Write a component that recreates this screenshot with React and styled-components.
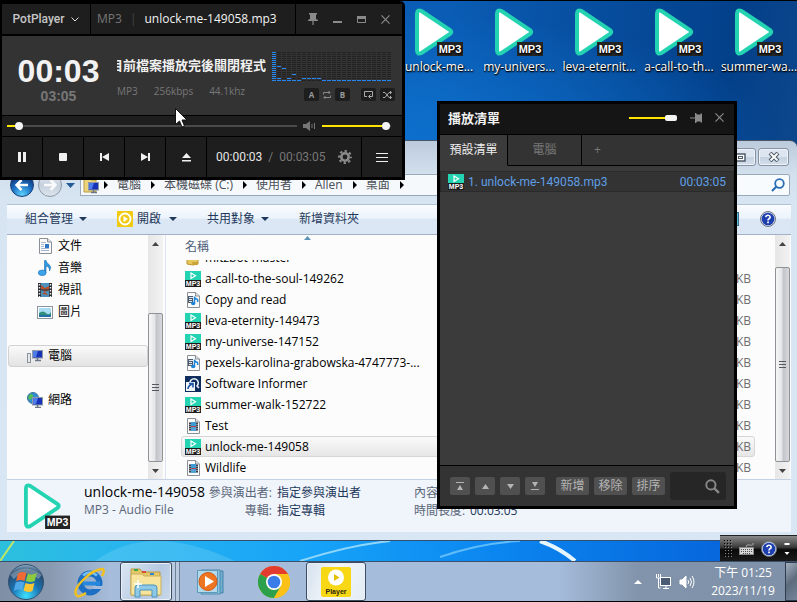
import React from "react";
import styled, { createGlobalStyle, css } from "styled-components";

const UI = `"Open Sans", "Noto Sans CJK TC", sans-serif`;
const COMPACT = `Roboto, "Noto Sans CJK TC", sans-serif`;

const GlobalStyle = createGlobalStyle`
  *, *::before, *::after { box-sizing: border-box; }
  body { margin: 0; font-family: ${UI}; font-size: 12px; line-height: 16px; background: #000; }
  button, input { font: inherit; color: inherit; margin: 0; padding: 0; border: 0; background: none; border-radius: 0; }
  button { cursor: pointer; }
  svg { display: block; flex: none; }
  a { color: inherit; text-decoration: none; }
`;

/* ---------- desktop ---------- */

const Desktop = styled.div`
  position: relative;
  display: flex;
  flex-direction: column;
  min-height: 100vh;
  overflow: hidden;
  background:
    radial-gradient(ellipse 420px 130px at 45% 140px, #0d72cf 0%, rgba(13, 114, 207, 0) 100%),
    linear-gradient(100deg, #0a5cb4 50%, #03408a 82%, #164c8c 100%);
`;

const IconRow = styled.div`
  display: flex;
  height: 140px;
  padding: 7px 0 0 399px;
  border-top: 1px solid #000;
`;

const Shortcut = styled.a`
  display: flex;
  flex: none;
  flex-direction: column;
  align-items: center;
  gap: 3px;
  width: 80px;
  color: #fff;
  text-shadow: 1px 1px 2px #000, 0 1px 1px #000;
  white-space: nowrap;
`;

const Strip = styled.div`
  position: relative;
  height: 21px;
  overflow: hidden;
  border-top: 1px solid #35506e;
  background: linear-gradient(90deg, #2cc0dd 0, #29b5ee 15%, #16a2f8 40%, #0b86f0 62%, #0667dc 90%);
  svg { width: 100%; height: 100%; }
`;

/* ---------- explorer ---------- */

const Explorer = styled.section`
  display: flex;
  flex: 1;
  flex-direction: column;
  padding: 0 6px 8px 7px;
  border-top: 1px solid #49576a;
  border-radius: 0 7px 0 0;
  background: linear-gradient(180deg, #bccbdc 0, #d3e0ee 34px, #d7e5f2 60px, #d9e6f3 100%);
`;

const Caption = styled.header`
  display: flex;
  justify-content: flex-end;
  gap: 2px;
  height: 33px;
  padding: 7px 2px 0 0;
`;

const CaptionButton = styled.button`
  display: grid;
  place-items: center;
  width: 31px;
  height: 18px;
  border: 1px solid #8793a3;
  border-radius: 3px;
  background: linear-gradient(#dde6f0 50%, #c4d1df 50%, #d3dfeb);
  box-shadow: inset 0 0 0 1px #edf3f9;
`;

const NavBar = styled.nav`
  display: flex;
  align-items: center;
  gap: 5px;
  height: 22px;
  margin-bottom: 8px;
  padding-right: 1px;
`;

const History = styled.div`
  display: flex;
  align-items: center;
  gap: 4px;
  padding-left: 3px;
`;

const Round = styled.button`
  display: grid;
  place-items: center;
  width: 24px;
  height: 24px;
  border-radius: 50%;
  border: 1px solid ${(p) => (p.$on ? "#173e78" : "#8d99a8")};
  background: ${(p) =>
    p.$on
      ? "radial-gradient(circle at 50% 95%, #5fd4ff 0, #1b6ec2 45%, #123c80 75%, #7ba5d8 100%)"
      : "linear-gradient(#e8eef5, #c5d0dc 50%, #dce4ec)"};
`;

const Address = styled.div`
  display: flex;
  flex: 1;
  align-items: center;
  height: 22px;
  overflow: hidden;
  border: 1px solid #9aa9ba;
  background: #f6f9fc;
  color: #4a4f57;
  white-space: nowrap;
`;

const Crumb = styled.a`
  display: flex;
  align-items: center;
  padding-left: ${(p) => (p.$first ? 0 : 9)}px;
  gap: ${(p) => (p.$first ? 3 : 10)}px;
`;

const Search = styled.label`
  display: flex;
  align-items: center;
  width: 200px;
  height: 22px;
  padding-right: 4px;
  border: 1px solid #9aa9ba;
  border-radius: 2px;
  background: #f8fbfd;
  input { flex: 1; min-width: 0; outline: 0; }
`;

const CommandBar = styled.div`
  display: flex;
  align-items: center;
  height: 31px;
  padding: 0 15px 2px 18px;
  border-top: 1px solid #b3c1d5;
  border-bottom: 1px solid #a3b1c6;
  background: linear-gradient(#fafcff 0, #ecf3fb 45%, #dce7f5 50%, #dbe6f4 100%);
  color: #1e395b;
`;

const Command = styled.button`
  display: flex;
  align-items: center;
  gap: ${(p) => p.$gap || 6}px;
  margin-right: ${(p) => p.$after || 0}px;
  white-space: nowrap;
`;

const Spacer = styled.div`
  flex: 1;
`;

const Body = styled.div`
  display: flex;
  flex: 1;
  min-height: 0;
  padding-right: 1px;
  background: #fcfcfc;
`;

const Tree = styled.ul`
  flex: none;
  width: 141px;
  margin: 0;
  padding: 0;
  list-style: none;
`;

const TreeItem = styled.li`
  display: flex;
  align-items: center;
  gap: 5px;
  height: 22px;
  margin: ${(p) => p.$before || 0}px 0 0 1px;
  padding-left: ${(p) => (p.$root ? 18 : 28)}px;
  border: 1px solid transparent;
  border-radius: 3px;
  ${(p) =>
    p.$selected &&
    css`
      border-color: #d2d2d2;
      background: linear-gradient(#fafafa, #e3e3e3);
    `}
`;

const ScrollBar = styled.div`
  display: flex;
  flex: none;
  flex-direction: column;
  width: 15px;
  background: linear-gradient(90deg, #e6e6e6, #f2f2f2);
`;

const ScrollButton = styled.button`
  display: grid;
  place-items: center;
  height: 17px;
`;

const Thumb = styled.div`
  display: grid;
  place-items: center;
  flex: 1;
  margin-top: ${(p) => p.$top}px;
  border: 1px solid #8f9196;
  border-radius: 2px;
  background: linear-gradient(90deg, #f6f6f6 0, #e4e5e8 45%, #c2c4ca 55%, #d8d9dd 100%);
`;

const Files = styled.table`
  display: flex;
  flex: 1;
  flex-direction: column;
  min-width: 0;
  margin-left: 2px;
  padding-left: 15px;
  border-left: 1px solid #dae4f2;
  thead { height: 25px; display: block; color: #4c607a; }
  tbody {
    display: flex;
    flex: 1 1 0;
    flex-direction: column;
    justify-content: flex-end;
    min-height: 0;
    overflow: hidden;
    padding-bottom: 1px;
  }
  tr { display: flex; }
  td, th { padding: 0; }
`;

const HeadName = styled.th`
  position: relative;
  width: 248px;
  margin: 4px 0 0 4px;
  font-weight: 400;
  text-align: left;
  svg { position: absolute; top: -3px; left: 119px; }
`;

const FileRow = styled.tr`
  flex: none;
  justify-content: space-between;
  height: 21px;
  margin-right: 20px;
  padding: 0 3px;
  border: 1px solid transparent;
  border-radius: 3px;
  ${(p) =>
    p.$selected &&
    css`
      border-color: #d6d6d6;
      background: linear-gradient(#fafafa, #e6e6e6);
    `}
`;

const NameCell = styled.td`
  display: flex;
  align-items: center;
  gap: 4px;
  color: #000;
  white-space: nowrap;
`;

const SizeCell = styled.td`
  display: flex;
  align-items: center;
  color: #6d6d6d;
`;

const Details = styled.footer`
  display: flex;
  height: 53px;
  padding: 3px 0 0 17px;
  border-top: 1px solid #c3d1e2;
  background: #f0f4fb;
  color: #5a6779;
  white-space: nowrap;
`;

const DetailName = styled.div`
  width: 133px;
  padding-left: 14px;
  flex: none;
  line-height: 18px;
  strong { display: block; font-weight: 400; font-size: 14px; color: #000; }
`;

const Facts = styled.dl`
  display: grid;
  grid-template-columns: ${(p) => p.$label}px 137px;
  column-gap: 5px;
  margin: 1px 0 0;
  line-height: 18px;
  align-content: start;
  dt { text-align: right; }
  dd { margin: 0; color: #1e395b; }
`;

/* ---------- player ---------- */

const Player = styled.section`
  position: absolute;
  top: 1px;
  left: 0;
  display: flex;
  flex-direction: column;
  gap: 1px;
  width: min(405px, 100%);
  padding: 3px 3px 3px 2px;
  border-radius: 0 5px 0 0;
  background: #000;
  color: #e6e6e6;
`;

const Bar = styled.div`
  display: flex;
  gap: 1px;
  height: ${(p) => p.$h}px;
  margin-bottom: ${(p) => p.$after || 0}px;
`;

const Cell = styled.div`
  display: flex;
  align-items: center;
  justify-content: ${(p) => p.$align || "flex-start"};
  flex: ${(p) => (p.$w ? "none" : "1")};
  width: ${(p) => (p.$w ? p.$w + "px" : "auto")};
  min-width: 0;
  gap: ${(p) => p.$gap || 0}px;
  padding: 0 ${(p) => p.$pad || 0}px;
  background: #1e1e1e;
  white-space: nowrap;
`;

const KeyCell = styled.button`
  display: grid;
  place-items: center;
  flex: none;
  width: 40px;
  background: #1e1e1e;
  color: #f0f0f0;
`;

const MenuButton = styled.button`
  display: flex;
  align-items: center;
  gap: 7px;
  font-family: ${COMPACT};
  font-weight: 500;
  color: #c6c6c6;
`;

const Dim = styled.span`
  color: ${(p) => p.$c || "#777"};
`;

const FileTitle = styled.span`
  color: #f2f2f2;
`;

const Times = styled.span`
  display: flex;
  gap: 6px;
  font-family: ${COMPACT};
`;

const Glyph = styled.button`
  display: grid;
  place-items: center;
  color: #8a8a8a;
`;

const Screen = styled.div`
  display: flex;
  height: 79px;
  background: #333;
`;

const Clock = styled.div`
  display: flex;
  flex-direction: column;
  align-items: center;
  width: 113px;
  padding-top: 19px;
  font-family: "Liberation Sans", sans-serif;
  font-weight: 700;
  b { font-size: 32px; line-height: 32px; color: #f2f2f2; }
  small { font-size: 14px; line-height: 18px; color: #777; }
`;

const Track = styled.div`
  display: flex;
  flex-direction: column;
  gap: 10px;
  width: 149px;
  margin-left: 2px;
  padding-top: 20px;
`;

const Marquee = styled.div`
  display: flex;
  justify-content: flex-end;
  overflow: hidden;
  font-size: 13px;
  line-height: 18px;
  font-weight: 700;
  color: #f0f0f0;
  white-space: nowrap;
`;

const Specs = styled.div`
  display: flex;
  gap: 16px;
  font-size: 10px;
  line-height: 14px;
  color: #777;
`;

const Visual = styled.div`
  display: flex;
  flex-direction: column;
  gap: 6px;
  padding: 16px 0 0 6px;
`;

const Modes = styled.div`
  display: flex;
  align-items: center;
  justify-content: flex-end;
  gap: 4px;
  width: 123px;
`;

const Mode = styled.button`
  display: grid;
  place-items: center;
  width: ${(p) => (p.$plain ? 8 : 15)}px;
  height: 13px;
  margin-left: ${(p) => p.$lead || 0}px;
  border-radius: 2px;
  background: ${(p) => (p.$plain ? "none" : "#1d1d1d")};
  color: #999;
  font-size: 8px;
  line-height: 13px;
  font-weight: 700;
`;

const Range = styled.input.attrs({ type: "range" })`
  appearance: none;
  flex: ${(p) => (p.$w ? "none" : "1")};
  width: ${(p) => (p.$w ? p.$w + "px" : "auto")};
  min-width: 0;
  height: 10px;
  background: linear-gradient(90deg, #ffe400 ${(p) => p.$fill}%, #4a4a4a ${(p) => p.$fill}%) center / 100% 2px no-repeat;
  &::-webkit-slider-thumb {
    appearance: none;
    width: ${(p) => (p.$wide ? 12 : 8)}px;
    height: ${(p) => (p.$wide ? 6 : 8)}px;
    border-radius: ${(p) => (p.$wide ? 2 : 4)}px;
    background: #f4f4f4;
  }
`;

const Pointer = styled.svg`
  position: absolute;
  left: 175px;
  top: 108px;
`;

/* ---------- playlist ---------- */

const Playlist = styled.section`
  position: absolute;
  top: 101px;
  right: 60px;
  display: flex;
  flex-direction: column;
  width: 300px;
  border: 3px solid #000;
  background: #3b3b3b;
  color: #aaa;
`;

const ListHead = styled.header`
  display: flex;
  align-items: center;
  height: 31px;
  padding: 0 10px 3px 8px;
  border-bottom: 1px solid #000;
  background: #151515;
  h2 { flex: 1; margin: 0; font-size: 13px; line-height: 16px; font-weight: 700; color: #f0f0f0; }
`;

const HeadTools = styled.div`
  display: flex;
  align-items: center;
  justify-content: flex-end;
  gap: 13px;
  width: 47px;
`;

const Tabs = styled.div`
  display: flex;
  height: 31px;
`;

const Tab = styled.button`
  flex: ${(p) => (p.$w ? "none" : "1")};
  width: ${(p) => (p.$w ? p.$w + "px" : "auto")};
  border-right: ${(p) => (p.$w ? "1px solid #000" : "0")};
  border-bottom: 1px solid ${(p) => (p.$on ? "#3b3b3b" : "#000")};
  background: ${(p) => (p.$on ? "#3b3b3b" : "#333")};
  color: ${(p) => (p.$on ? "#eee" : "#777")};
  text-align: ${(p) => (p.$w ? "center" : "left")};
  padding-left: ${(p) => (p.$w ? 0 : 12)}px;
`;

const Items = styled.ol`
  height: 299px;
  margin: 0;
  padding: 5px 0 0;
  list-style: none;
`;

const Item = styled.li`
  display: flex;
  align-items: center;
  gap: 4px;
  height: 21px;
  padding: 0 7px;
  border: 1px solid #2a2a2a;
  background: #333;
  color: #5f9fe6;
  font-family: ${COMPACT};
  span:last-child { margin-left: auto; }
`;

const ListFoot = styled.footer`
  display: flex;
  align-items: center;
  gap: 5px;
  height: 41px;
  padding: 0 8px 0 10px;
  border-top: 1px solid #000;
  background: #333;
`;

const FootButton = styled.button`
  display: grid;
  place-items: center;
  width: ${(p) => (p.$text ? 33 : 20)}px;
  height: 18px;
  margin-left: ${(p) => p.$lead || 0}px;
  border-radius: 2px;
  background: #505050;
  color: #b4b4b4;
  line-height: 18px;
`;

const Find = styled.label`
  display: flex;
  align-items: center;
  flex: 1;
  min-width: 0;
  height: 28px;
  padding: 0 6px;
  border-radius: 3px;
  background: #262626;
  input { flex: 1; min-width: 0; width: 0; outline: 0; }
`;

/* ---------- taskbar ---------- */

const Taskbar = styled.footer`
  display: flex;
  align-items: center;
  height: 41px;
  padding-left: 8px;
  border-top: 1px solid #3c5069;
  border-bottom: 1px solid #000;
  background: linear-gradient(90deg, #7f90a6 0, #8999b0 50px, #a5bcda 110px, #a5bcdb 70%, #8294ab 80%, #7f91a8 100%);
`;

const Task = styled.button`
  display: grid;
  place-items: center;
  flex: none;
  width: ${(p) => p.$w}px;
  height: 39px;
  margin-left: ${(p) => p.$lead || 0}px;
  ${(p) =>
    p.$open &&
    css`
      border: 1px solid #3d4c60;
      border-radius: 3px;
      box-shadow: inset 0 0 0 1px #e9f0f8;
      background: linear-gradient(120deg, #dbe6f3, #b5c9e1 60%, #c9d9eb);
    `}
  ${(p) => p.$bright && css`background: linear-gradient(110deg, #d5e1ee, #f2f6fa 45%, #e3ebf4);`}
`;

const Stack = styled.span`
  width: 4px;
  height: 39px;
  border-right: 1px solid #6f8099;
  background: #b9cae0;
`;

const Tray = styled.div`
  display: flex;
  align-items: center;
  margin-left: auto;
  height: 100%;
  color: #fff;
`;

const TrayButton = styled.button`
  display: grid;
  place-items: center;
  margin-right: ${(p) => p.$after}px;
`;

const TrayClock = styled.time`
  width: 84px;
  text-align: center;
  line-height: 18px;
`;

const ShowDesktop = styled.button`
  width: 12px;
  height: 100%;
  border: 1px solid #2f3c4d;
  border-right: 0;
  background: linear-gradient(135deg, #a2afbf, #5d6b7d 50%, #75859a);
`;

const LanguageBar = styled.div`
  position: absolute;
  right: 0;
  bottom: 41px;
  display: flex;
  align-items: center;
  gap: 7px;
  width: 77px;
  height: 26px;
  padding: 0 3px 0 4px;
  border-top: 1px solid #222;
  background: linear-gradient(#8a8a8a 0, #3a3a3a 45%, #0a0a0a 55%, #1a1a1a 100%);
`;

/* ---------- drawings ---------- */

const Mp3Large = ({ size = 48 }) => (
  <svg width={size} height={size} viewBox="0 0 48 48">
    <path d="M2 6 Q2 1 6.500 3 L35 22 Q37.500 24 35 26 L6.500 45 Q2 47 2 42Z" fill="#fff" stroke="#23d3b2" strokeWidth="4" />
    <rect x="22" y="34" width="26" height="14" fill="#242424" />
    <text x="35" y="45" textAnchor="middle" fontFamily="Liberation Sans, sans-serif" fontWeight="700" fontSize="11" fill="#fff">MP3</text>
  </svg>
);

const Mp3Small = () => (
  <svg width="16" height="16" viewBox="0 0 16 16">
    <rect width="16" height="10" fill="#23d3b2" />
    <path d="M6 2 L10.500 4.800 L6 7.500Z" fill="none" stroke="#fff" strokeWidth="1.200" />
    <rect y="9" width="16" height="7" fill="#1c1c1c" />
    <text x="8" y="15" textAnchor="middle" fontFamily="Liberation Sans, sans-serif" fontWeight="700" fontSize="7" fill="#fff">MP3</text>
  </svg>
);

const Page = ({ children }) => (
  <svg width="16" height="16" viewBox="0 0 16 16">
    <path d="M2.500 .5 H10.500 L14.500 4 V15.500 H2.500Z" fill="#fbfbfb" stroke="#8b8f96" />
    <path d="M10.500 .5 V4 H14.500" fill="#dde1e6" stroke="#8b8f96" />
    {children}
  </svg>
);

const DocIcon = () => (
  <Page>
    <path d="M4 4.500h5M4 6.500h3M4 8.500h3M4 10.500h8M4 12.500h8" stroke="#a3b6d2" />
    <rect x="8" y="6" width="4" height="4" fill="#2e75c2" />
  </Page>
);
const MusicPage = () => (
  <Page>
    <rect x="3" y="4" width="5" height="7" fill="#4b5a6c" />
    <path d="M4 5.500h4M4 7.500h3M4 9.500h3" stroke="#dfe8f2" />
    <path d="M9.500 11V4.500q0 2 2 2.500t1 3" fill="none" stroke="#1d86d8" strokeWidth="1.500" />
    <ellipse cx="8.200" cy="11.500" rx="2.200" ry="1.800" fill="#1d86d8" />
  </Page>
);
const VideoPage = () => (
  <Page>
    <rect x="4" y="4" width="9" height="9" fill="#39424e" />
    <rect x="6" y="4" width="5" height="4" fill="#3d9bd6" />
    <rect x="6" y="9" width="5" height="4" fill="#54a1d4" />
    <path d="M6 8.500h5" stroke="#b4404a" />
    <path d="M5 4v9M12 4v9" stroke="#d9dde2" strokeDasharray="1 1" />
  </Page>
);
const InformerIcon = () => (
  <svg width="16" height="16" viewBox="0 0 16 16">
    <rect width="16" height="16" fill="#0f2d5c" />
    <path d="M5 6a4.200 4.200 0 1 1 7 4l2 2" fill="none" stroke="#e5edf7" strokeWidth="1.600" />
    <rect x="1" y="6" width="9" height="9" fill="#f3f6fa" />
    <path d="M3 13q0-3 4-5M4 7.500h4v4" fill="none" stroke="#1c55a8" strokeWidth="1.600" />
  </svg>
);
const FolderIcon = () => (
  <svg width="16" height="16" viewBox="0 0 16 16">
    <path d="M2 2h5l1 2h5v10l-5 1-6-1z" fill="#e7c75a" stroke="#b9952e" />
    <path d="M7 12h6v3H8z" fill="#c9a23a" />
  </svg>
);
const NoteIcon = () => (
  <svg width="16" height="16" viewBox="0 0 16 16">
    <path d="M7.500 13V.5h1.500q.5 2.500 3 4 3 2.500 .5 6.500 .5-4-3.500-5v7z" fill="#2f9ae0" stroke="#1b6cb4" strokeWidth=".6" />
    <ellipse cx="5.200" cy="12.800" rx="3.900" ry="2.800" fill="#3ba4ea" stroke="#1b6cb4" strokeWidth=".6" />
  </svg>
);
const FilmIcon = () => (
  <svg width="16" height="16" viewBox="0 0 16 16">
    <rect x="1" y="1" width="14" height="14" fill="#2a2d33" />
    <rect x="4" y="1" width="8" height="14" fill="#4f91bd" />
    <path d="M4 3l4 3 4-2v4l-4 2-4-3zM5 12l3-2 3 3" fill="#b4502c" />
    <path d="M4 8h8" stroke="#16334a" />
    <path d="M2.500 2v13M13.500 2v13" stroke="#eee" strokeWidth="1.500" strokeDasharray="1.500 1.500" />
  </svg>
);
const PictureIcon = () => (
  <svg width="16" height="16" viewBox="0 0 16 16">
    <rect x=".5" y="2.500" width="15" height="12" fill="#fff" stroke="#8d949c" />
    <rect x="2" y="4" width="12" height="9" fill="#a9dcf2" />
    <path d="M2 9q4-3 7 0t5-1v5H2z" fill="#2f8f7b" />
    <path d="M2 11h12v2H2z" fill="#286cab" />
  </svg>
);
const Monitor = ({ x, y }) => (
  <g transform={`translate(${x} ${y})`}>
    <rect x=".5" y=".5" width="10" height="7.500" fill="#1633b8" stroke="#8e98a8" />
    <path d="M1 1h5l-2 6H1z" fill="#4f7be8" />
    <path d="M5.500 8v2M3 10.500h6" stroke="#6d7787" strokeWidth="1.500" />
  </g>
);
const ComputerIcon = () => (
  <svg width="16" height="16" viewBox="0 0 16 16">
    <rect x=".5" y="5.500" width="3" height="9" fill="#e5e7ea" stroke="#8c929b" />
    <Monitor x={5} y={2} />
  </svg>
);
const NetworkIcon = () => (
  <svg width="16" height="16" viewBox="0 0 16 16">
    <circle cx="6" cy="6" r="5.500" fill="#2f8fd0" stroke="#3c719c" />
    <path d="M3 2q4 0 3 3l-3 3-2-2zM7 7l3-2v4z" fill="#54bd4f" />
    <Monitor x={5} y={5} />
  </svg>
);
const DriveIcon = () => (
  <svg width="20" height="18" viewBox="0 0 20 18">
    <path d="M3 2h6l1 2h5v12H3z" fill="#ecd47a" stroke="#b99c42" />
    <Monitor x={7} y={6} />
  </svg>
);
const PotIcon = () => (
  <svg width="16" height="16" viewBox="0 0 16 16">
    <rect width="16" height="16" rx="1" fill="#f1cb12" />
    <circle cx="8" cy="8" r="5.500" fill="none" stroke="#fff" strokeWidth="1.800" />
    <path d="M6.500 5L11 8 6.500 11z" fill="#fff" />
  </svg>
);
const Arrow = ({ dir = "down", w = 8, h = 4, fill = "#1e395b" }) => {
  const d = {
    down: `M0 0H${w}L${w / 2} ${h}Z`,
    up: `M0 ${h}H${w}L${w / 2} 0Z`,
    right: `M0 0V${h}L${w} ${h / 2}Z`,
  }[dir];
  return <svg width={w} height={h}><path d={d} fill={fill} /></svg>;
};
const Lens = ({ size = 14, stroke = "#2a6db5", flip }) => (
  <svg width={size} height={size} viewBox="0 0 14 14">
    <g transform={flip ? "matrix(-1 0 0 1 14 0)" : undefined} fill="none" stroke={stroke}>
      <circle cx="5.500" cy="5.500" r="4.300" strokeWidth="1.800" />
      <path d="M8.500 8.500L13 13" strokeWidth="2.200" />
    </g>
  </svg>
);
const HelpIcon = () => (
  <svg width="16" height="16" viewBox="0 0 16 16">
    <circle cx="8" cy="8" r="7.500" fill="#d5dae6" stroke="#6d7688" />
    <circle cx="8" cy="8" r="6.300" fill="#1e3fae" />
    <path d="M5.800 6.200q.2-2 2.200-2t2.200 1.800q0 1.200-1.200 1.800-1 .5-1 1.700" fill="none" stroke="#fff" strokeWidth="1.600" />
    <rect x="7.200" y="10.500" width="1.700" height="1.700" fill="#fff" />
  </svg>
);
const Cross = ({ size = 10 }) => (
  <svg width={size} height={size} viewBox="0 0 10 10"><path d="M.5.5l9 9M9.500.5l-9 9" stroke="#8a8a8a" strokeWidth="1.300" /></svg>
);
const PinUp = () => (
  <svg width="10" height="12" viewBox="0 0 10 12" fill="currentColor"><path d="M1 0h8v1.500H8V6l2 1v1H5.600v4H4.400V8H0V7l2-1V1.500H1z" /></svg>
);
const PinSide = () => (
  <svg width="12" height="10" viewBox="0 0 12 10" fill="currentColor"><path d="M12 0.500v9h-1.500v-1H7l-1 1.500H5V5.600H0V4.400h5V0h1l1 1.500h3.500v-1z" /></svg>
);
const Gear = () => (
  <svg width="14" height="14" viewBox="0 0 14 14" fill="none" stroke="#8a8a8a">
    <circle cx="7" cy="7" r="3.700" strokeWidth="2.600" />
    <circle cx="7" cy="7" r="6" strokeWidth="2" strokeDasharray="2.356 2.356" strokeDashoffset="1.178" />
  </svg>
);

const SPECTRUM = [
  ...Array.from({ length: 15 }, (_, i) => [0, i]),
  [1, 7], [1, 13], [1, 14], [2, 8], [2, 14], [3, 13], [3, 14], [4, 11], [4, 14], [5, 14],
  [6, 13], [7, 13], [8, 13], [9, 13],
  ...Array.from({ length: 14 }, (_, i) => [i + 10, 14]),
];
const Spectrum = () => (
  <svg width="119" height="30" shapeRendering="crispEdges">
    {Array.from({ length: 15 }, (_, i) => (
      <path key={i} d={`M0 ${i * 2 + 0.5}H119`} stroke="#222" strokeDasharray="4 1" />
    ))}
    {SPECTRUM.map(([c, r]) => (
      <rect key={`${c}-${r}`} x={c * 5} y={r * 2} width="4" height="1" fill="#2388f5" />
    ))}
  </svg>
);

/* ---------- data ---------- */

const SHORTCUTS = ["unlock-me...", "my-univers...", "leva-eternit...", "a-call-to-th...", "summer-wa..."];
const CRUMBS = ["電腦", "本機磁碟 (C:)", "使用者", "Allen", "桌面"];
const FILES = [
  [FolderIcon, "mitzbot-master", ""],
  [Mp3Small, "a-call-to-the-soul-149262", "KB"],
  [MusicPage, "Copy and read", "KB"],
  [Mp3Small, "leva-eternity-149473", "KB"],
  [Mp3Small, "my-universe-147152", "KB"],
  [MusicPage, "pexels-karolina-grabowska-4747773-...", "KB"],
  [InformerIcon, "Software Informer", "KB"],
  [Mp3Small, "summer-walk-152722", "KB"],
  [VideoPage, "Test", "KB"],
  [Mp3Small, "unlock-me-149058", "KB"],
  [VideoPage, "Wildlife", "KB"],
];

const Scroll = ({ top }) => (
  <ScrollBar>
    <ScrollButton aria-label="Up"><Arrow dir="up" w={7} fill="#444" /></ScrollButton>
    <Thumb $top={top}>
      <svg width="7" height="8"><path d="M0 .5h7M0 3.500h7M0 6.500h7" stroke="#55585e" /></svg>
    </Thumb>
    <ScrollButton aria-label="Down"><Arrow w={7} fill="#444" /></ScrollButton>
  </ScrollBar>
);

function ExplorerWindow() {
  return (
    <Explorer>
      <Caption>
        <CaptionButton aria-label="Maximize">
          <svg width="11" height="9"><rect x="1" y="1" width="9" height="7" fill="#fff" stroke="#525c69" strokeWidth="1.500" /><rect x="3.500" y="3.500" width="4" height="2" fill="#fff" stroke="#525c69" /></svg>
        </CaptionButton>
        <CaptionButton aria-label="Close">
          <svg width="12" height="10" viewBox="0 0 12 10"><path d="M2 1l8 8M10 1L2 9" stroke="#525c69" strokeWidth="4" /><path d="M2.500 1.500l7 7M9.500 1.500l-7 7" stroke="#fff" strokeWidth="1.800" /></svg>
        </CaptionButton>
      </Caption>
      <NavBar>
        <History>
          <Round $on aria-label="Back"><svg width="14" height="12" viewBox="0 0 14 12"><path d="M6.500 1L1.500 6l5 5M2 6h11" fill="none" stroke="#fff" strokeWidth="2.600" /></svg></Round>
          <Round aria-label="Forward"><svg width="14" height="12" viewBox="0 0 14 12"><path d="M7.500 1l5 5-5 5M12 6H1" fill="none" stroke="#f8fafc" strokeWidth="2.600" /></svg></Round>
          <Arrow w={9} h={5} fill="#245a96" />
        </History>
        <Address>
          <Crumb $first href="#"><DriveIcon /><Arrow dir="right" w={4} h={8} fill="#000" /></Crumb>
          {CRUMBS.map((c) => (
            <Crumb key={c} href="#">{c}<Arrow dir="right" w={4} h={8} fill="#000" /></Crumb>
          ))}
        </Address>
        <Search><input type="search" aria-label="Search" /><Lens flip /></Search>
      </NavBar>
      <CommandBar>
        <Command $after={30}>組合管理<Arrow /></Command>
        <Command $after={30} $gap={4}><PotIcon />開啟<span /><Arrow /></Command>
        <Command $after={30}>共用對象<Arrow /></Command>
        <Command>新增資料夾</Command>
        <Spacer />
        <Command $after={21} aria-label="Preview">
          <svg width="16" height="14"><rect x=".5" y=".5" width="15" height="13" fill="#fff" stroke="#3a6d8c" /><rect x="9" y="1" width="6" height="12" fill="#5cc0dc" /></svg>
        </Command>
        <Command aria-label="Help"><HelpIcon /></Command>
      </CommandBar>
      <Body>
        <Tree>
          <TreeItem><DocIcon />文件</TreeItem>
          <TreeItem><NoteIcon />音樂</TreeItem>
          <TreeItem><FilmIcon />視訊</TreeItem>
          <TreeItem><PictureIcon />圖片</TreeItem>
          <TreeItem $root $selected $before={22}><ComputerIcon />電腦</TreeItem>
          <TreeItem $root $before={22}><NetworkIcon />網路</TreeItem>
        </Tree>
        <Scroll top={61} />
        <Files>
          <thead>
            <tr><HeadName>名稱<Arrow dir="up" w={7} fill="#5d93b5" /></HeadName></tr>
          </thead>
          <tbody>
            {FILES.map(([Icon, name, size]) => (
              <FileRow key={name} $selected={name === "unlock-me-149058"}>
                <NameCell><Icon />{name}</NameCell>
                <SizeCell>{size}</SizeCell>
              </FileRow>
            ))}
          </tbody>
        </Files>
        <Scroll top={15} />
      </Body>
      <Details>
        <Mp3Large size={46} />
        <DetailName><strong>unlock-me-149058</strong>MP3 - Audio File</DetailName>
        <Facts $label={69}>
          <dt>參與演出者:</dt><dd>指定參與演出者</dd>
          <dt>專輯:</dt><dd>指定專輯</dd>
        </Facts>
        <Facts $label={51}>
          <dt>內容類型:</dt><dd>指定內容類型</dd>
          <dt>時間長度:</dt><dd>00:03:05</dd>
        </Facts>
      </Details>
    </Explorer>
  );
}

function PlayerWindow() {
  return (
    <Player>
      <Bar $h={30} $after={1}>
        <Cell $w={88} $align="center">
          <MenuButton>PotPlayer<svg width="8" height="5"><path d="M.5.5L4 4 7.500.5" fill="none" stroke="#ddd" /></svg></MenuButton>
        </Cell>
        <Cell $pad={6} $gap={8}><Dim>MP3</Dim><Dim $c="#444">|</Dim><FileTitle>unlock-me-149058.mp3</FileTitle></Cell>
        <Cell $w={106} $gap={15} $align="center">
          <Glyph aria-label="Pin"><PinUp /></Glyph>
          <Glyph aria-label="Minimize"><svg width="9" height="10"><rect y="7" width="9" height="2" fill="#8a8a8a" /></svg></Glyph>
          <Glyph aria-label="Maximize"><svg width="9" height="7"><path d="M.5.5h8v6h-8z" fill="none" stroke="#8a8a8a" /><path d="M0 0h9v3H0z" fill="#8a8a8a" /></svg></Glyph>
          <Glyph aria-label="Close"><Cross size={9} /></Glyph>
        </Cell>
      </Bar>
      <Screen>
        <Clock><b>00:03</b><small>03:05</small></Clock>
        <Track>
          <Marquee><span>目前檔案播放完後關閉程式</span></Marquee>
          <Specs><span>MP3</span><span>256kbps</span><span>44.1khz</span></Specs>
        </Track>
        <Visual>
          <Spectrum />
          <Modes>
            <Mode>A</Mode>
            <Mode $plain aria-label="Repeat A to B"><svg width="8" height="8" viewBox="0 0 8 8" fill="none" stroke="#888"><path d="M.5 3.500V1.500H7M5.500 0L7 1.500 5.500 3M7.500 4.500v2H1M2.500 5L1 6.500 2.500 8" /></svg></Mode>
            <Mode>B</Mode>
            <Mode $lead={7} aria-label="Repeat"><svg width="9" height="9" viewBox="0 0 9 9" fill="none" stroke="#aaa"><path d="M3 6.500H.5v-5h8v5H5M6.500 4.500l-2 2 2 2" /></svg></Mode>
            <Mode aria-label="Shuffle"><svg width="9" height="8" viewBox="0 0 9 8" fill="none" stroke="#aaa"><path d="M0 1.500h2l4 5h2.500M0 6.500h2l4-5h2.500M7 0l1.500 1.500L7 3M7 5l1.500 1.500L7 8" /></svg></Mode>
          </Modes>
        </Visual>
      </Screen>
      <Bar $h={20}>
        <Cell $pad={5} $gap={6}>
          <Range $fill={3} aria-label="Position" min="0" max="185" defaultValue="5" />
          <svg width="13" height="10" viewBox="0 0 13 10"><path d="M0 3h3l4-3v10L3 7H0z" fill="#777" /><path d="M9 3v4M11.500 2v6" stroke="#777" /></svg>
          <Range $w={69} $fill={95} aria-label="Volume" defaultValue="98" />
          <span />
        </Cell>
      </Bar>
      <Bar $h={40}>
        <KeyCell aria-label="Pause"><svg width="8" height="10"><path d="M0 0h3v10H0zM5 0h3v10H5z" fill="#f0f0f0" /></svg></KeyCell>
        <KeyCell aria-label="Stop"><svg width="8" height="8"><rect width="8" height="8" rx="1" fill="#f0f0f0" /></svg></KeyCell>
        <KeyCell aria-label="Previous"><svg width="9" height="8"><path d="M0 0h2v8H0zM9 0v8L2 4z" fill="#f0f0f0" /></svg></KeyCell>
        <KeyCell aria-label="Next"><svg width="9" height="8"><path d="M7 0h2v8H7zM0 0v8l7-4z" fill="#f0f0f0" /></svg></KeyCell>
        <KeyCell aria-label="Eject"><svg width="9" height="9"><path d="M4.500 0L9 5H0zM0 7h9v1.500H0z" fill="#f0f0f0" /></svg></KeyCell>
        <Cell $pad={9} $gap={6}>
          <Times><span>00:00:03</span><Dim>/</Dim><Dim>00:03:05</Dim></Times>
          <Spacer />
          <Glyph aria-label="Settings"><Gear /></Glyph>
          <span />
        </Cell>
        <KeyCell aria-label="Playlist"><svg width="12" height="9"><path d="M0 .5h12M0 4.500h12M0 8.500h12" stroke="#f0f0f0" /></svg></KeyCell>
      </Bar>
    </Player>
  );
}

function PlaylistWindow() {
  return (
    <Playlist>
      <ListHead>
        <h2>播放清單</h2>
        <Range $w={48} $fill={90} $wide aria-label="Opacity" defaultValue="100" />
        <HeadTools>
          <Glyph aria-label="Pin"><PinSide /></Glyph>
          <Glyph aria-label="Close"><Cross size={9} /></Glyph>
        </HeadTools>
      </ListHead>
      <Tabs>
        <Tab $w={68} $on>預設清單</Tab>
        <Tab $w={74}>電腦</Tab>
        <Tab>+</Tab>
      </Tabs>
      <Items>
        <Item><Mp3Small /><span>1. unlock-me-149058.mp3</span><span>00:03:05</span></Item>
      </Items>
      <ListFoot>
        <FootButton aria-label="Top"><svg width="8" height="8"><path d="M0 .5h8" stroke="#b4b4b4" /><path d="M4 3l3 5H1z" fill="#b4b4b4" /></svg></FootButton>
        <FootButton aria-label="Up"><Arrow dir="up" w={7} h={5} fill="#b4b4b4" /></FootButton>
        <FootButton aria-label="Down"><Arrow w={7} h={5} fill="#b4b4b4" /></FootButton>
        <FootButton aria-label="Bottom"><svg width="8" height="8"><path d="M0 7.500h8" stroke="#b4b4b4" /><path d="M4 5L1 0h6z" fill="#b4b4b4" /></svg></FootButton>
        <FootButton $text $lead={6}>新增</FootButton>
        <FootButton $text>移除</FootButton>
        <FootButton $text>排序</FootButton>
        <Find><input type="search" aria-label="Find" /><Lens size={15} stroke="#888" /></Find>
      </ListFoot>
    </Playlist>
  );
}

const StartIcon = () => (
  <svg width="36" height="36" viewBox="0 0 36 36">
    <defs>
      <radialGradient id="orb" cx=".5" cy=".9" r=".9"><stop offset="0" stopColor="#3fe0ff" /><stop offset=".45" stopColor="#1b74b4" /><stop offset=".8" stopColor="#274c70" /><stop offset="1" stopColor="#8fb0c9" /></radialGradient>
    </defs>
    <circle cx="18" cy="18" r="17.500" fill="url(#orb)" stroke="#33516e" />
    <path d="M4 13q14-12 28 0" fill="none" stroke="#fff" strokeOpacity=".3" strokeWidth="5" />
    <path d="M10 9.500q4-2.500 8.500-.5l-2 8q-4-2-8.500 0z" fill="#ef6a34" />
    <path d="M19.800 9.500q4.500 2 9-.5l-2 8q-4.500 2-9 0z" fill="#8ccb3f" />
    <path d="M7.700 18.500q4.500-2 8.500 0l-2 8q-4-2-8.500 .5z" fill="#4fa8e8" />
    <path d="M17.500 19q4.500 2 9 0l-2 8q-4.500 2-9-.5z" fill="#fbc534" />
  </svg>
);
const IeIcon = () => (
  <svg width="32" height="32" viewBox="0 0 32 32">
    <circle cx="17" cy="17" r="9.500" fill="none" stroke="#1d6fc4" strokeWidth="6" />
    <path d="M10 17.500h17" stroke="#2489de" strokeWidth="4" />
    <path d="M20 20h10l-1 3h-9z" fill="#a5bcda" />
    <path d="M10 9.500q7-6 14 0" fill="none" stroke="#74c0f5" strokeWidth="2.500" />
    <path d="M4 30q-5-5 6-16T30 3q2 2-1 7M4 30q3 1 9-3" fill="none" stroke="#f2c11d" strokeWidth="2.400" />
  </svg>
);
const FoldersIcon = () => (
  <svg width="34" height="32" viewBox="0 0 34 32">
    <path d="M2 3h9l2 3h18v23H2z" fill="#e6c766" stroke="#b89a46" />
    <path d="M5 3h4v2H5z" fill="#3ca84a" /><path d="M13 5h4v2h-4z" fill="#d64f33" /><path d="M21 7h4v2h-4z" fill="#2b84d4" />
    <path d="M2 8h11l2 2h17v19H2z" fill="#f7e59d" stroke="#c9ae5d" />
    <path d="M6 31V22q0-3 3-3h16q3 0 3 3v9h-5v-7H11v7z" fill="#8ecae8" stroke="#4a93bd" />
    <path d="M9 14v8M5 18h8" stroke="#fff" strokeWidth="1.500" />
  </svg>
);
const WmpIcon = () => (
  <svg width="30" height="28" viewBox="0 0 30 28">
    <path d="M8 3h18v22H8z" fill="#6faed1" stroke="#4784a8" /><path d="M4 2h19v24H4z" fill="#8fc4e0" stroke="#4d8bb0" /><path d="M.5 2.500h20v22H.5z" fill="#b3d9ec" stroke="#5c99bb" />
    <circle cx="11" cy="13.500" r="9" fill="#ee7522" stroke="#d35a12" />
    <path d="M8 8l9 5.500L8 19z" fill="#fff" />
  </svg>
);
const ChromeIcon = () => (
  <svg width="32" height="32" viewBox="0 0 32 32">
    <circle cx="16" cy="16" r="16" fill="#fbc116" />
    <path d="M16 16L2.140 8A16 16 0 0 1 29.860 8z" fill="#e33b2e" />
    <path d="M2.140 8A16 16 0 0 0 16 32l7-12-7-4z" fill="#2da04c" />
    <path d="M16 8h13.860A16 16 0 0 1 16 32l7-12z" fill="#fbc116" />
    <circle cx="16" cy="16" r="8" fill="#fff" /><circle cx="16" cy="16" r="6.300" fill="#3b7de8" />
  </svg>
);
const PlayerIcon = () => (
  <svg width="30" height="30" viewBox="0 0 30 30">
    <rect width="30" height="30" rx="2" fill="#f8d714" />
    <circle cx="15" cy="10.500" r="8" fill="#fff" />
    <path d="M13 7l5.500 3.500L13 14z" fill="#e4c000" />
    <text x="15" y="27" textAnchor="middle" fontFamily="Liberation Sans, sans-serif" fontWeight="700" fontSize="7" fill="#2a2410">Player</text>
  </svg>
);

export default function App() {
  return (
    <Desktop>
      <GlobalStyle />
      <IconRow>
        {SHORTCUTS.map((s) => (
          <Shortcut key={s} href="#"><Mp3Large />{s}</Shortcut>
        ))}
      </IconRow>
      <ExplorerWindow />
      <Strip>
        <svg viewBox="0 0 797 20" preserveAspectRatio="none" fill="none">
          <path d="M95 20Q150-20 235 20z" fill="#7fd8f4" fillOpacity=".3" />
          <path d="M0 20L14 0" stroke="#bde66a" strokeWidth="2" />
          <path d="M300 20Q350 4 390 0" stroke="#8fd6fb" strokeWidth="2" />
          <path d="M440 16Q480 2 520 0" stroke="#5fbcf8" strokeWidth="2" />
          <path d="M540 0Q560 7 575 20" stroke="#e6f6ff" strokeWidth="4" />
        </svg>
      </Strip>
      <Taskbar>
        <Task $w={36} aria-label="Start"><StartIcon /></Task>
        <Task $w={32} $lead={29} aria-label="Internet Explorer"><IeIcon /></Task>
        <Task $w={52} $lead={15} $open aria-label="Explorer"><FoldersIcon /></Task>
        <Stack /><Stack />
        <Task $w={30} $lead={17} aria-label="Media Player"><WmpIcon /></Task>
        <Task $w={32} $lead={31} aria-label="Chrome"><ChromeIcon /></Task>
        <Task $w={60} $lead={16} $open $bright><PlayerIcon /></Task>
        <Tray>
          <TrayButton $after={13} aria-label="Hidden icons"><Arrow dir="up" w={8} h={4} fill="#fff" /></TrayButton>
          <TrayButton $after={8} aria-label="Network">
            <svg width="16" height="16" viewBox="0 0 16 16" fill="none" stroke="#fff"><rect x="5.500" y="3.500" width="10" height="8" fill="#4a5b73" /><path d="M8 14.500h6M11 12v2M1.500 0v4h4V0M3.500 4v10h2M3.500 0v3" /></svg>
          </TrayButton>
          <TrayButton $after={6} aria-label="Volume">
            <svg width="16" height="14" viewBox="0 0 16 14" fill="none" stroke="#fff"><path d="M1 5h2l4-4v12L3 9H1z" fill="#fff" /><path d="M9 5q1.500 2 0 4M11 3q3 4 0 8M13 1q4 6 0 12" /></svg>
          </TrayButton>
          <TrayClock dateTime="2023-11-19T13:25">下午 01:25<br />2023/11/19</TrayClock>
          <ShowDesktop aria-label="Show desktop" />
        </Tray>
      </Taskbar>
      <LanguageBar>
        <svg width="8" height="17"><path d="M.5 0v17M3.500 0v17M6.500 0v17" stroke="#000" strokeDasharray="1 2" /><path d="M1.500 1v16M4.500 1v16M7.500 1v16" stroke="#888" strokeDasharray="1 2" /></svg>
        <svg width="15" height="14" viewBox="0 0 15 14"><path d="M7 5q0-3 4-2t3-2" fill="none" stroke="#aaa" /><rect x=".5" y="5.500" width="14" height="7" fill="#d8d8d8" stroke="#888" /><path d="M2 7.500h11M2 9.500h11M4 11.500h7" stroke="#555" strokeDasharray="1 1" /></svg>
        <HelpIcon />
        <svg width="6" height="14"><rect width="5" height="2" x="0.500" y="1" fill="#fff" /><path d="M.5 10h5L3 13z" fill="#fff" /></svg>
      </LanguageBar>
      <PlaylistWindow />
      <PlayerWindow />
      <Pointer width="13" height="20" viewBox="0 0 13 20"><path d="M.5.5v16l4-3.500 2.500 6 2.500-1-2.500-6H12z" fill="#fff" stroke="#111" /></Pointer>
    </Desktop>
  );
}
